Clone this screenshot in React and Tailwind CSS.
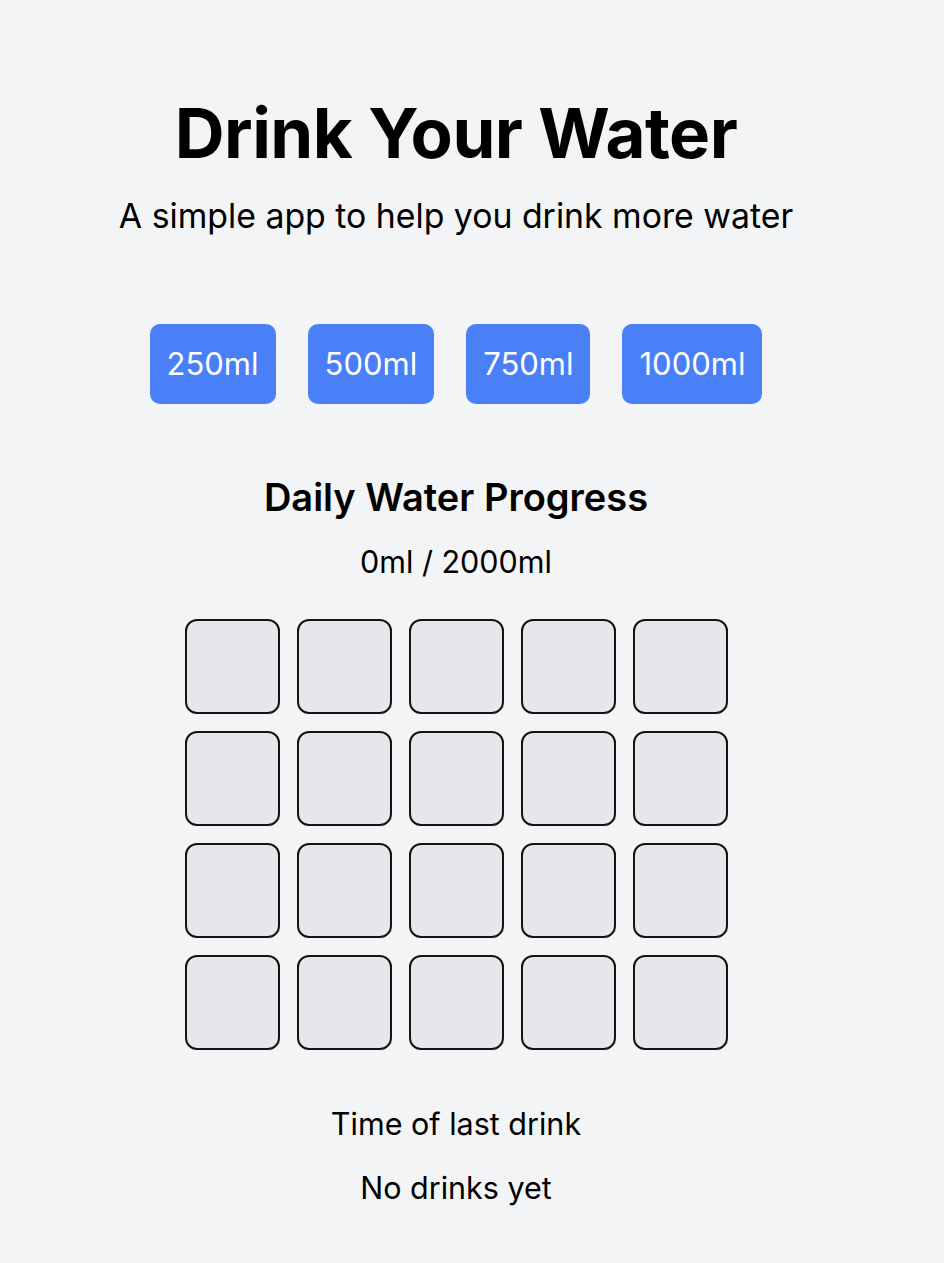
export default function App() {
  const amounts = ["250ml", "500ml", "750ml", "1000ml"];
  return (
    <div className="min-h-[1263px] bg-[#f3f4f6] text-black flex flex-col items-center pr-[32px]" style={{ fontFamily: "Inter, 'Noto Sans', sans-serif" }}>
      <h1 className="mt-[88px] text-[69px] leading-[90px] font-bold tracking-[-0.5px]">Drink Your Water</h1>
      <p className="mt-[16px] text-[33.8px] leading-[44px]">A simple app to help you drink more water</p>
      <div className="mt-[86px] flex gap-[32px]">
        {amounts.map((a) => (
          <button key={a} className="h-[80px] px-[17px] rounded-[10px] bg-[#4a80f7] text-white text-[31px] flex items-center justify-center">
            {a}
          </button>
        ))}
      </div>
      <h2 className="mt-[68px] text-[38px] leading-[50px] font-semibold">Daily Water Progress</h2>
      <p className="mt-[20px] text-[30.5px] leading-[40px]">0ml / 2000ml</p>
      <div className="mt-[37px] grid grid-cols-5 gap-[17px]">
        {Array.from({ length: 20 }).map((_, i) => (
          <div key={i} className="w-[95px] h-[95px] rounded-[12px] border-2 border-[#141414] bg-[#e5e7eb]" />
        ))}
      </div>
      <p className="mt-[54px] text-[30.5px] leading-[40px]">Time of last drink</p>
      <p className="mt-[24px] text-[30.5px] leading-[40px]">No drinks yet</p>
    </div>
  );
}
